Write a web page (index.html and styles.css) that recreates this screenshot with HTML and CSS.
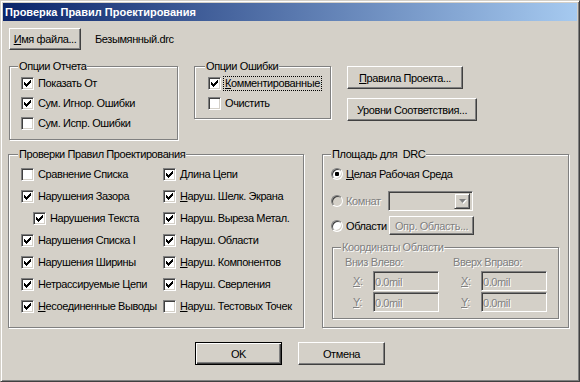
FILE: index.html
```html
<!DOCTYPE html>
<html lang="ru">

<head>
    <meta charset="UTF-8" />
    <title>Проверка Правил Проектирования</title>
    <link rel="stylesheet" href="styles.css">
</head>

<body>
    <div class="window">
        <div class="titlebar">Проверка Правил Проектирования</div>

        <div class="content">
            <div class="file-row">
                <button class="btn btn-file"><u>И</u>мя файла...</button>
                <span class="file-name">Безымянный.drc</span>
            </div>

            <div class="options-row">
                <div class="group group-report">
                    <div class="group-title">Опции Отчета</div>
                    <div class="check"><span class="box"><svg width="7" height="7" viewBox="0 0 7 7"><path d="M0 2h1v3h-1zM1 3h1v3h-1zM2 4h1v3h-1zM3 3h1v3h-1zM4 2h1v3h-1zM5 1h1v3h-1zM6 0h1v3h-1z" /></svg></span>Показать От</div>
                    <div class="check"><span class="box"><svg width="7" height="7" viewBox="0 0 7 7"><path d="M0 2h1v3h-1zM1 3h1v3h-1zM2 4h1v3h-1zM3 3h1v3h-1zM4 2h1v3h-1zM5 1h1v3h-1zM6 0h1v3h-1z" /></svg></span>Сум. Игнор. Ошибки</div>
                    <div class="check"><span class="box"></span>Сум. Испр. Ошибки</div>
                </div>

                <div class="group group-errors">
                    <div class="group-title">Опции Ошибки</div>
                    <div class="check"><span class="box"><svg width="7" height="7" viewBox="0 0 7 7"><path d="M0 2h1v3h-1zM1 3h1v3h-1zM2 4h1v3h-1zM3 3h1v3h-1zM4 2h1v3h-1zM5 1h1v3h-1zM6 0h1v3h-1z" /></svg></span><span class="focus"><u>К</u>омментированные</span></div>
                    <div class="check"><span class="box"></span>Очистить</div>
                </div>

                <div class="btn-col">
                    <button class="btn btn-rules"><u>П</u>равила Проекта...</button>
                    <button class="btn btn-levels">Уровни Соответствия...</button>
                </div>
            </div>

            <div class="main-row">
                <div class="group group-checks">
                    <div class="group-title">Проверки Правил Проектирования</div>
                    <div class="checks-grid">
                        <div class="check"><span class="box"></span>Сравнение Списка</div>
                        <div class="check"><span class="box"><svg width="7" height="7" viewBox="0 0 7 7"><path d="M0 2h1v3h-1zM1 3h1v3h-1zM2 4h1v3h-1zM3 3h1v3h-1zM4 2h1v3h-1zM5 1h1v3h-1zM6 0h1v3h-1z" /></svg></span>Длина Цепи</div>
                        <div class="check"><span class="box"><svg width="7" height="7" viewBox="0 0 7 7"><path d="M0 2h1v3h-1zM1 3h1v3h-1zM2 4h1v3h-1zM3 3h1v3h-1zM4 2h1v3h-1zM5 1h1v3h-1zM6 0h1v3h-1z" /></svg></span>Нарушения Зазора</div>
                        <div class="check"><span class="box"><svg width="7" height="7" viewBox="0 0 7 7"><path d="M0 2h1v3h-1zM1 3h1v3h-1zM2 4h1v3h-1zM3 3h1v3h-1zM4 2h1v3h-1zM5 1h1v3h-1zM6 0h1v3h-1z" /></svg></span><span><u>Н</u>аруш. Шелк. Экрана</span></div>
                        <div class="check indent"><span class="box"><svg width="7" height="7" viewBox="0 0 7 7"><path d="M0 2h1v3h-1zM1 3h1v3h-1zM2 4h1v3h-1zM3 3h1v3h-1zM4 2h1v3h-1zM5 1h1v3h-1zM6 0h1v3h-1z" /></svg></span>Нарушения Текста</div>
                        <div class="check"><span class="box"><svg width="7" height="7" viewBox="0 0 7 7"><path d="M0 2h1v3h-1zM1 3h1v3h-1zM2 4h1v3h-1zM3 3h1v3h-1zM4 2h1v3h-1zM5 1h1v3h-1zM6 0h1v3h-1z" /></svg></span>Наруш. Выреза Метал.</div>
                        <div class="check"><span class="box"><svg width="7" height="7" viewBox="0 0 7 7"><path d="M0 2h1v3h-1zM1 3h1v3h-1zM2 4h1v3h-1zM3 3h1v3h-1zM4 2h1v3h-1zM5 1h1v3h-1zM6 0h1v3h-1z" /></svg></span>Нарушения Списка I</div>
                        <div class="check"><span class="box"><svg width="7" height="7" viewBox="0 0 7 7"><path d="M0 2h1v3h-1zM1 3h1v3h-1zM2 4h1v3h-1zM3 3h1v3h-1zM4 2h1v3h-1zM5 1h1v3h-1zM6 0h1v3h-1z" /></svg></span>Наруш. Области</div>
                        <div class="check"><span class="box"><svg width="7" height="7" viewBox="0 0 7 7"><path d="M0 2h1v3h-1zM1 3h1v3h-1zM2 4h1v3h-1zM3 3h1v3h-1zM4 2h1v3h-1zM5 1h1v3h-1zM6 0h1v3h-1z" /></svg></span>Нарушения Ширины</div>
                        <div class="check"><span class="box"><svg width="7" height="7" viewBox="0 0 7 7"><path d="M0 2h1v3h-1zM1 3h1v3h-1zM2 4h1v3h-1zM3 3h1v3h-1zM4 2h1v3h-1zM5 1h1v3h-1zM6 0h1v3h-1z" /></svg></span><span><u>Н</u>аруш. Компонентов</span></div>
                        <div class="check"><span class="box"><svg width="7" height="7" viewBox="0 0 7 7"><path d="M0 2h1v3h-1zM1 3h1v3h-1zM2 4h1v3h-1zM3 3h1v3h-1zM4 2h1v3h-1zM5 1h1v3h-1zM6 0h1v3h-1z" /></svg></span>Нетрассируемые Цепи</div>
                        <div class="check"><span class="box"><svg width="7" height="7" viewBox="0 0 7 7"><path d="M0 2h1v3h-1zM1 3h1v3h-1zM2 4h1v3h-1zM3 3h1v3h-1zM4 2h1v3h-1zM5 1h1v3h-1zM6 0h1v3h-1z" /></svg></span>Наруш. Сверления</div>
                        <div class="check"><span class="box"><svg width="7" height="7" viewBox="0 0 7 7"><path d="M0 2h1v3h-1zM1 3h1v3h-1zM2 4h1v3h-1zM3 3h1v3h-1zM4 2h1v3h-1zM5 1h1v3h-1zM6 0h1v3h-1z" /></svg></span><span><u>Н</u>есоединенные Выводы</span></div>
                        <div class="check"><span class="box"></span><span><u>Н</u>аруш. Тестовых Точек</span></div>
                    </div>
                </div>

                <div class="group group-area">
                    <div class="group-title">Площадь для&nbsp; DRC</div>
                    <div class="radio-row row-whole">
                        <span class="radio on"></span><span><u>Ц</u>елая Рабочая Среда</span>
                    </div>
                    <div class="radio-row row-room">
                        <span class="radio disabled"></span><span class="radio-label disabled-text">Комнат</span>
                        <div class="combo">
                            <span class="combo-btn"><svg width="7" height="4" viewBox="0 0 7 4"><path d="M0 0h7l-3.5 4z" /></svg></span>
                        </div>
                    </div>
                    <div class="radio-row row-region">
                        <span class="radio"></span><span class="radio-label">Области</span>
                        <button class="btn btn-region disabled-text">Опр. Область...</button>
                    </div>

                    <div class="group group-coords">
                        <div class="group-title disabled-text">Координаты Области</div>
                        <div class="coords-grid">
                            <div class="coord-head disabled-text">Вниз Влево:</div>
                            <div class="coord-head disabled-text">Вверх Вправо:</div>
                            <div class="coord"><span class="axis disabled-text"><u>X</u>:</span><span class="field disabled-text">0.0mil</span></div>
                            <div class="coord"><span class="axis disabled-text"><u>X</u>:</span><span class="field disabled-text">0.0mil</span></div>
                            <div class="coord"><span class="axis disabled-text"><u>Y</u>:</span><span class="field disabled-text">0.0mil</span></div>
                            <div class="coord"><span class="axis disabled-text"><u>Y</u>:</span><span class="field disabled-text">0.0mil</span></div>
                        </div>
                    </div>
                </div>
            </div>

            <div class="action-row">
                <button class="btn btn-default">OK</button>
                <button class="btn btn-cancel">Отмена</button>
            </div>
        </div>
    </div>
</body>

</html>
```

FILE: styles.css
```css
body {
    margin: 0;
    background: #d4d0c8;
    font-family: "Liberation Sans", Arial, sans-serif;
    font-size: 11px;
    letter-spacing: -0.4px;
    color: #000;
}

.window {
    box-sizing: border-box;
    width: 580px;
    height: 382px;
    padding: 2px;
    background: #d4d0c8;
    border: 1px solid;
    border-color: #d4d0c8 #404040 #404040 #d4d0c8;
    box-shadow: inset 1px 1px 0 #fff, inset -1px -1px 0 #808080;
}

.titlebar {
    height: 18px;
    line-height: 18px;
    padding-left: 2px;
    color: #fff;
    font-weight: bold;
    letter-spacing: 0;
    background: linear-gradient(to right, #0a246a, #a6caf0);
}

/* buttons */
.btn {
    box-sizing: border-box;
    height: 23px;
    padding: 0;
    font: inherit;
    letter-spacing: inherit;
    color: #000;
    background: #d4d0c8;
    border: 1px solid;
    border-color: #fff #404040 #404040 #fff;
    box-shadow: inset -1px -1px 0 #808080;
}

.btn-file {
    width: 72px;
    height: 22px;
    margin-left: 6px;
}

.btn-rules {
    width: 116px;
}

.btn-levels {
    width: 130px;
}

.btn-default {
    width: 87px;
    border: 1px solid #000;
    box-shadow: inset 1px 1px 0 #fff, inset -1px -1px 0 #404040, inset -2px -2px 0 #808080;
}

.btn-cancel {
    width: 87px;
    margin-left: 16px;
}

.disabled-text {
    color: #808080;
    text-shadow: 1px 1px 0 #fff;
}

/* rows */
.file-row {
    display: flex;
    align-items: center;
    margin-top: 7px;
}

.file-name {
    margin-left: 14px;
}

.options-row,
.main-row {
    display: flex;
    align-items: flex-start;
}

.options-row {
    margin-top: 16px;
}

.main-row {
    margin-top: 14px;
}

.action-row {
    display: flex;
    margin-top: 14px;
    padding-left: 192px;
}

.btn-col {
    display: flex;
    flex-direction: column;
    align-items: flex-start;
    gap: 9px;
    margin-left: 16px;
}

/* group boxes */
.group {
    box-sizing: border-box;
    border: 1px solid #808080;
    box-shadow: 1px 1px 0 #fff, inset 1px 1px 0 #fff;
}

.group-title {
    display: table;
    height: 13px;
    line-height: 13px;
    margin: -7px 0 0 7px;
    padding: 0 1px;
    background: #d4d0c8;
}

.group-report {
    width: 169px;
    height: 74px;
    margin-left: 6px;
    padding-left: 11px;
}

.group-errors {
    width: 137px;
    height: 53px;
    margin-left: 16px;
    padding-left: 13px;
}

.group-report .group-title,
.group-errors .group-title {
    margin-left: -3px;
}

.group-checks {
    width: 296px;
    height: 174px;
    margin-left: 5px;
    padding: 0 0 0 12px;
}

.group-checks .group-title {
    margin-left: -3px;
}

.group-area {
    width: 247px;
    height: 174px;
    margin-left: 18px;
    padding-left: 8px;
}

.group-area .group-title {
    margin-left: 0;
}

/* checkboxes */
.check {
    display: flex;
    align-items: center;
    gap: 4px;
    height: 20px;
    white-space: nowrap;
}

.box {
    box-sizing: border-box;
    flex: none;
    width: 13px;
    height: 13px;
    padding: 2px;
    background: #fff;
    border: 1px solid;
    border-color: #808080 #fff #fff #808080;
    box-shadow: inset 1px 1px 0 #404040, inset -1px -1px 0 #d4d0c8;
}

.box svg {
    display: block;
    fill: #000;
    shape-rendering: crispEdges;
}

.focus {
    margin-left: -2px;
    padding: 0 1px;
    line-height: 13px;
    border: 1px dotted #000;
}

.checks-grid {
    display: grid;
    grid-template-columns: 142px auto;
    grid-auto-rows: 22px;
    margin-top: 2px;
}

.checks-grid .check {
    height: 22px;
}

.indent {
    padding-left: 12px;
}

/* radio area */
.radio-row {
    display: flex;
    align-items: center;
    white-space: nowrap;
}

.row-whole {
    height: 22px;
    gap: 3px;
    margin-top: 2px;
}

.row-room {
    height: 20px;
    margin-top: 6px;
}

.row-region {
    height: 19px;
    margin-top: 5px;
}

.radio {
    box-sizing: border-box;
    flex: none;
    width: 12px;
    height: 12px;
    border-radius: 50%;
    background: #fff;
    border: 1px solid;
    border-color: #808080 #fff #fff #808080;
    box-shadow: inset 1px 1px 0 #404040, inset -1px -1px 0 #d4d0c8;
}

.radio.on {
    background: radial-gradient(circle, #000 0 2px, #fff 2.5px);
}

.radio.disabled {
    background: #d4d0c8;
}

.radio-label {
    width: 42px;
    margin-left: 3px;
    overflow: hidden;
}

.combo {
    box-sizing: border-box;
    display: flex;
    justify-content: flex-end;
    align-items: center;
    width: 85px;
    height: 20px;
    padding: 2px;
    background: #d4d0c8;
    border: 1px solid;
    border-color: #808080 #fff #fff #808080;
    box-shadow: inset 1px 1px 0 #404040, inset -1px -1px 0 #d4d0c8;
}

.combo-btn {
    box-sizing: border-box;
    display: flex;
    align-items: center;
    justify-content: center;
    width: 16px;
    height: 16px;
    background: #d4d0c8;
    border: 1px solid;
    border-color: #d4d0c8 #404040 #404040 #d4d0c8;
    box-shadow: inset 1px 1px 0 #fff, inset -1px -1px 0 #808080;
}

.combo-btn svg {
    display: block;
    fill: #808080;
    filter: drop-shadow(1px 1px 0 #fff);
}

.btn-region {
    width: 85px;
    height: 19px;
    margin-left: 1px;
}

.group-coords {
    width: 227px;
    height: 72px;
    margin: 12px 0 0 1px;
    padding-left: 12px;
}

.group-coords .group-title {
    margin-left: -4px;
}

.coords-grid {
    display: grid;
    grid-template-columns: 108px auto;
    grid-template-rows: 16px 20px 20px;
    row-gap: 1px;
}

.coord-head {
    line-height: 16px;
}

.coord {
    display: flex;
    align-items: center;
}

.axis {
    flex: none;
    width: 28px;
    padding-left: 8px;
    box-sizing: border-box;
}

.field {
    flex: none;
    box-sizing: border-box;
    width: 66px;
    height: 20px;
    line-height: 16px;
    padding: 2px 1px;
    background: #d4d0c8;
    border: 1px solid;
    border-color: #808080 #fff #fff #808080;
    box-shadow: inset 1px 1px 0 #404040, inset -1px -1px 0 #d4d0c8;
}
```
